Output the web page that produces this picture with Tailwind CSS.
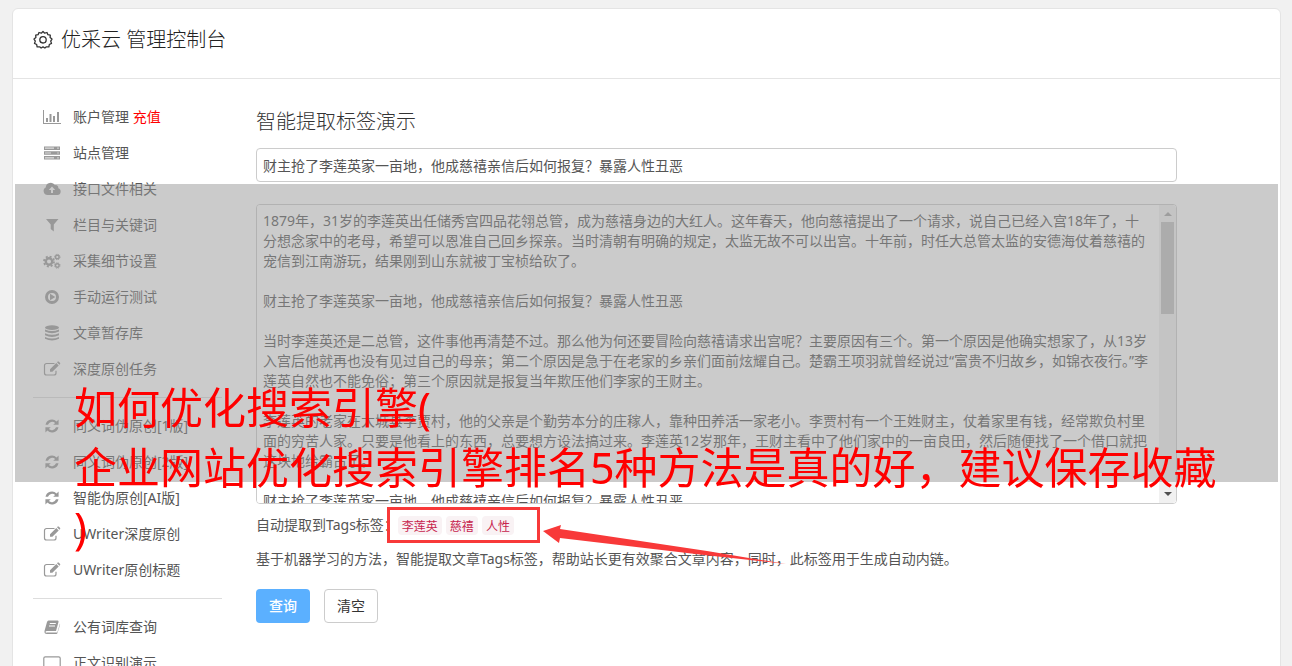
<!DOCTYPE html>
<html lang="zh-CN">
<head>
    <meta charset="UTF-8">
    <meta name="viewport" content="width=device-width, initial-scale=1.0">
    <title>优采云 管理控制台</title>
    <script src="https://cdn.jsdelivr.net/npm/@tailwindcss/browser@4"></script>
    <style>
        body { font-family: "Noto Sans", "Noto Sans CJK SC", sans-serif; }
        .demo-text { scrollbar-width: none; }
        .demo-text::-webkit-scrollbar { display: none; }
    </style>
</head>
<body class="relative h-screen overflow-hidden bg-[#f1f1f1] pt-2 pl-3 pr-[11px] text-sm leading-5 text-[#555]">
    <!-- Icon sprites -->
    <svg class="hidden">
        <symbol id="refresh" viewBox="0 0 16 16">
            <path d="M1.5 6.8A6.6 6.6 0 0 1 12.6 3.4L14.6 1.5v5.3H9.2l1.9-1.9A4.5 4.5 0 0 0 4 6.8zM14.5 9.2A6.6 6.6 0 0 1 3.4 12.6l-2 1.9V9.2h5.4l-1.9 1.9A4.5 4.5 0 0 0 12 9.2z" fill="currentColor"/>
        </symbol>
        <symbol id="edit" viewBox="0 0 18 16">
            <path d="M11.5 2.5H3.5a2 2 0 0 0-2 2v7.5a2 2 0 0 0 2 2H11a2 2 0 0 0 2-2V9.800" fill="none" stroke="currentColor" stroke-width="1.200"/>
            <path d="M7 8.300L13.300 2l2.400 2.400L9.400 10.700H7zM14 1.300l.7-.7q.5-.4 1 0l1.400 1.400q.4.500 0 1l-.7.7z" fill="currentColor"/>
        </symbol>
    </svg>

    <div class="min-h-screen rounded-t-md border border-[#e4e4e4] bg-white">
        <!-- Header -->
        <header class="flex h-[70px] items-center gap-2 border-b border-[#e4e4e4] pb-2 pl-5">
            <svg class="size-5" viewBox="0 0 20 20" fill="none" stroke="#333" stroke-width="1.300">
                <path d="M10 1.500l1.700 1.700 2.300-.7.900 2.200 2.400.4-.2 2.500 1.900 1.500-1.300 2 .8 2.300-2.200 1.100-.4 2.400-2.500-.1L11.900 18 10 16.900 8.100 18l-1.500-1.200-2.500.1-.4-2.400-2.200-1.100.8-2.300L1 9.100l1.900-1.500-.2-2.500 2.400-.4L6 2.500l2.300.7z" stroke-linejoin="round"/>
                <circle cx="10" cy="9.800" r="3.200"/>
            </svg>
            <h1 class="text-xl font-light text-[#222]">优采云 管理控制台</h1>
        </header>

        <div class="flex pl-5">
            <!-- Sidebar -->
            <nav class="w-[189px] shrink-0 pt-5">
                <ul>
                    <li><a href="#" class="flex h-9 items-center gap-3 pl-[10px]">
                        <svg class="h-4 w-[18px] text-[#999]" viewBox="0 0 18 16" fill="currentColor"><path d="M0 1h1v13h17v1H0zM3 9h2v4H3zM6.500 5h2v8h-2zM10 7h2v6h-2zM14 3h2v10h-2z"/></svg>
                        <span>账户管理 <span class="text-[#f00]">充值</span></span></a></li>
                    <li><a href="#" class="flex h-9 items-center gap-3 pl-[10px]">
                        <svg class="h-4 w-[18px] text-[#999]" viewBox="0 0 18 16"><path d="M1 1.500h16v3.500H1zM1 6.200h16v3.500H1zM1 11h16v3.500H1z" fill="currentColor"/><path d="M2 3.200h9M2 8h6M2 12.800h9" stroke="#ddd" stroke-width="1.200"/><path d="M14.500 3.200h1M14.500 8h1M14.500 12.800h1" stroke="#fff" stroke-width="1.200"/></svg>
                        <span>站点管理</span></a></li>
                    <li><a href="#" class="flex h-9 items-center gap-3 pl-[10px]">
                        <svg class="h-4 w-[18px] text-[#999]" viewBox="0 0 18 16"><path d="M4.500 14a4 4 0 0 1-1.800-7.500A5 5 0 0 1 12 4.200a2.600 2.600 0 0 1 3.300 3A3.500 3.500 0 0 1 14.500 14z" fill="currentColor"/><path d="M9 5.500l3.200 3.400H10V12H8V8.900H5.800z" fill="#fff"/></svg>
                        <span>接口文件相关</span></a></li>
                    <li><a href="#" class="flex h-9 items-center gap-3 pl-[10px]">
                        <svg class="h-4 w-[18px] text-[#999]" viewBox="0 0 18 16"><path d="M3 2h12.500l-4.700 5.500v7L7.700 12V7.500z" fill="currentColor"/></svg>
                        <span>栏目与关键词</span></a></li>
                    <li><a href="#" class="flex h-9 items-center gap-3 pl-[10px]">
                        <svg class="h-4 w-[18px] text-[#999]" viewBox="0 0 18 16" fill="none" stroke="currentColor"><circle cx="6" cy="8.500" r="3.200" stroke-width="2.400"/><circle cx="6" cy="8.500" r="5" stroke-width="1.800" stroke-dasharray="2 1.930"/><circle cx="14.300" cy="4" r="1.800" stroke-width="1.400"/><circle cx="14.300" cy="4" r="2.700" stroke-dasharray="1.200 .92"/><circle cx="14.300" cy="12.500" r="1.800" stroke-width="1.400"/><circle cx="14.300" cy="12.500" r="2.700" stroke-dasharray="1.200 .92"/></svg>
                        <span>采集细节设置</span></a></li>
                    <li><a href="#" class="flex h-9 items-center gap-3 pl-[10px]">
                        <svg class="h-4 w-[18px] text-[#999]" viewBox="0 0 18 16"><circle cx="9" cy="8" r="5.500" fill="none" stroke="currentColor" stroke-width="3"/><path d="M7 4.800L12.300 8 7 11.200z" fill="currentColor"/></svg>
                        <span>手动运行测试</span></a></li>
                    <li><a href="#" class="flex h-9 items-center gap-3 pl-[10px]">
                        <svg class="h-4 w-[18px] text-[#999]" viewBox="0 0 18 16" fill="currentColor"><ellipse cx="9" cy="2.600" rx="7" ry="2.300"/><path d="M2 4.500q7 3 14 0v2q-7 3.500-14 0zM2 8.300q7 3 14 0v2q-7 3.500-14 0zM2 12q7 3 14 0v1.800q-7 3.500-14 0z"/></svg>
                        <span>文章暂存库</span></a></li>
                    <li><a href="#" class="flex h-9 items-center gap-3 pl-[10px]"><svg class="h-4 w-[18px] text-[#999]"><use href="#edit"/></svg><span>深度原创任务</span></a></li>
                </ul>
                <hr class="my-[10px] border-[#ddd]">
                <ul>
                    <li><a href="#" class="flex h-9 items-center gap-3 pl-[10px]"><svg class="h-4 w-[18px] text-[#999]"><use href="#refresh"/></svg><span>同义词伪原创[1版]</span></a></li>
                    <li><a href="#" class="flex h-9 items-center gap-3 pl-[10px]"><svg class="h-4 w-[18px] text-[#999]"><use href="#refresh"/></svg><span>同义词伪原创[2版]</span></a></li>
                    <li><a href="#" class="flex h-9 items-center gap-3 pl-[10px]"><svg class="h-4 w-[18px] text-[#999]"><use href="#refresh"/></svg><span>智能伪原创[AI版]</span></a></li>
                    <li><a href="#" class="flex h-9 items-center gap-3 pl-[10px]"><svg class="h-4 w-[18px] text-[#999]"><use href="#edit"/></svg><span>UWriter深度原创</span></a></li>
                    <li><a href="#" class="flex h-9 items-center gap-3 pl-[10px]"><svg class="h-4 w-[18px] text-[#999]"><use href="#edit"/></svg><span>UWriter原创标题</span></a></li>
                </ul>
                <hr class="my-[10px] border-[#ddd]">
                <ul>
                    <li><a href="#" class="flex h-9 items-center gap-3 pl-[10px]">
                        <svg class="h-4 w-[18px] text-[#999]" viewBox="0 0 18 16"><path d="M5.500 1.500h9.300q1 .3.700 1.400L13 12H4q-1.500 0-1.500.9T4 13.600h10.300L17 4.500q.2 1-.2 2l-2.300 7.400q-.3 1-1.300 1H4q-3-.2-2.500-3L4 3q.5-1.500 1.500-1.500z" fill="currentColor"/><path d="M6.800 4.500h6M6 7h6" stroke="#fff"/></svg>
                        <span>公有词库查询</span></a></li>
                    <li><a href="#" class="flex h-9 items-center gap-3 pl-[10px]">
                        <svg class="h-4 w-[18px] text-[#999]" viewBox="0 0 18 16" fill="none" stroke="currentColor" stroke-width="1.200"><rect x=".8" y="1.800" width="16.400" height="10.500" rx="1.500"/><path d="M5 15h8"/></svg>
                        <span>正文识别演示</span></a></li>
                </ul>
            </nav>

            <!-- Demo form -->
            <main class="min-w-0 flex-1 pt-[29px] pr-[103px] pl-[34px]">
                <h2 class="h-10 text-xl leading-7 font-light text-[#333]">智能提取标签演示</h2>
                <input type="text" aria-label="标题" value="财主抢了李莲英家一亩地，他成慈禧亲信后如何报复？暴露人性丑恶" class="block h-[34px] w-full rounded border border-[#ccc] bg-white px-[6px]">
                <div class="relative mt-[22px]">
                    <textarea aria-label="正文" class="demo-text block h-[300px] w-full resize-none rounded border border-[#ccc] bg-white py-[6px] pr-[26px] pl-[6px]">1879年，31岁的李莲英出任储秀宫四品花翎总管，成为慈禧身边的大红人。这年春天，他向慈禧提出了一个请求，说自己已经入宫18年了，十分想念家中的老母，希望可以恩准自己回乡探亲。当时清朝有明确的规定，太监无故不可以出宫。十年前，时任大总管太监的安德海仗着慈禧的宠信到江南游玩，结果刚到山东就被丁宝桢给砍了。

财主抢了李莲英家一亩地，他成慈禧亲信后如何报复？暴露人性丑恶

当时李莲英还是二总管，这件事他再清楚不过。那么他为何还要冒险向慈禧请求出宫呢？主要原因有三个。第一个原因是他确实想家了，从13岁入宫后他就再也没有见过自己的母亲；第二个原因是急于在老家的乡亲们面前炫耀自己。楚霸王项羽就曾经说过“富贵不归故乡，如锦衣夜行。”李莲英自然也不能免俗；第三个原因就是报复当年欺压他们李家的王财主。

李莲英的老家在大城县李贾村，他的父亲是个勤劳本分的庄稼人，靠种田养活一家老小。李贾村有一个王姓财主，仗着家里有钱，经常欺负村里面的穷苦人家。只要是他看上的东西，总要想方设法搞过来。李莲英12岁那年，王财主看中了他们家中的一亩良田，然后随便找了一个借口就把这块地给霸占了。

财主抢了李莲英家一亩地，他成慈禧亲信后如何报复？暴露人性丑恶</textarea>
                    <!-- Scrollbar -->
                    <div class="absolute top-px right-px bottom-px flex w-[17px] flex-col items-center justify-between rounded-r-sm bg-[#f1f1f1]">
                        <svg class="h-[17px] w-[17px]" viewBox="0 0 17 17"><path d="M5 11h8L9 7z" fill="#a3a3a3"/></svg>
                        <div class="mb-auto h-[92px] w-[13px] bg-[#c1c1c1]"></div>
                        <svg class="h-[17px] w-[17px]" viewBox="0 0 17 17"><path d="M5 6h8l-4 4z" fill="#505050"/></svg>
                    </div>
                </div>
                <div class="mt-[11px] flex items-center">
                    <span>自动提取到Tags标签：</span>
                    <div class="flex gap-1 text-xs leading-[19px] text-[#c7254e]">
                        <code class="rounded bg-[#f9f2f4] px-1 font-[Noto_Sans_CJK_SC]">李莲英</code>
                        <code class="rounded bg-[#f9f2f4] px-1 font-[Noto_Sans_CJK_SC]">慈禧</code>
                        <code class="rounded bg-[#f9f2f4] px-1 font-[Noto_Sans_CJK_SC]">人性</code>
                    </div>
                </div>
                <p class="mt-[14px]">基于机器学习的方法，智能提取文章Tags标签，帮助站长更有效聚合文章内容，同时，此标签用于生成自动内链。</p>
                <div class="mt-5 flex gap-[14px]">
                    <button type="button" class="h-[34px] w-[54px] rounded bg-[#5bb0ff] font-medium text-white">查询</button>
                    <button type="button" class="h-[34px] w-[54px] rounded border border-[#ccc] bg-white text-[#333]">清空</button>
                </div>
            </main>
        </div>
    </div>

    <!-- Tag highlight and arrow -->
    <div class="pointer-events-none absolute top-[507px] left-[387px] h-9 w-[153px] border-3 border-[#f83939]"></div>
    <svg class="pointer-events-none absolute top-[520px] left-[540px] h-11 w-[250px]" viewBox="0 0 250 44"><path d="M3 11L21 5l-1 4 147 22 79 13-82-9-144-17-1 5z" fill="#f83939"/></svg>

    <!-- Caption banner -->
    <div class="pointer-events-none absolute top-[184px] right-[14px] left-[15px] h-[298px] bg-[#979797]/50"></div>
    <div class="pointer-events-none absolute top-[378px] left-[74px] text-[43px] leading-[60px] whitespace-nowrap text-[#f00]">
        <p>如何优化搜索引擎(</p>
        <p>企业网站优化搜索引擎排名5种方法是真的好，建议保存收藏</p>
        <p class="mt-[60px] hidden"></p>
        <p>)</p>
    </div>
</body>
</html>
